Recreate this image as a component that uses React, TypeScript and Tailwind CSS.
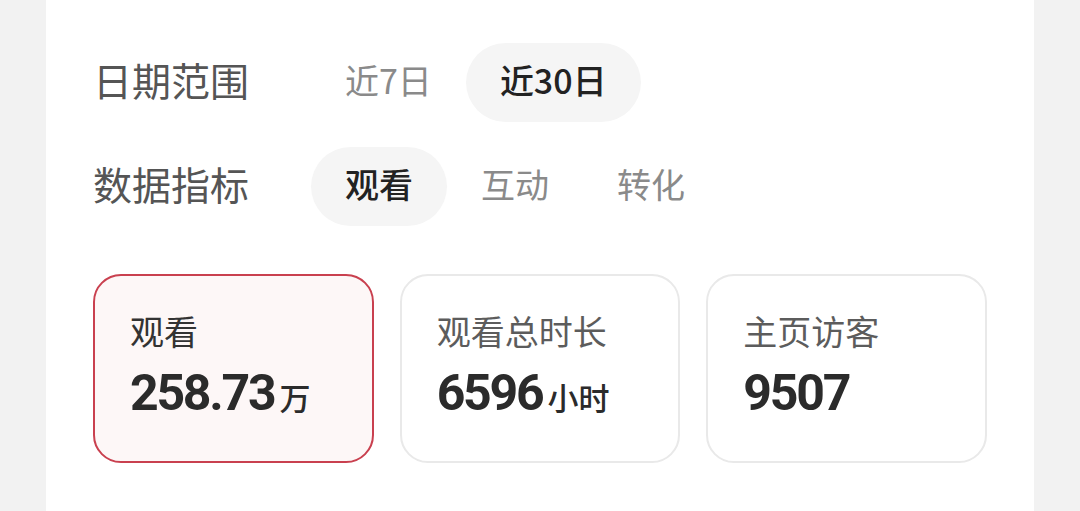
import { useState } from 'react';

const cjk = { fontFamily: '"Noto Sans CJK SC", "Noto Sans", sans-serif' };
const num = { fontFamily: 'Roboto, "Noto Sans CJK SC", sans-serif' };

interface Stat {
  label: string;
  value: string;
  unit?: string;
}

const stats: Stat[] = [
  { label: '观看', value: '258.73', unit: '万' },
  { label: '观看总时长', value: '6596', unit: '小时' },
  { label: '主页访客', value: '9507' },
];

function Pills({ items, active, onPick }: { items: string[]; active: number; onPick: (i: number) => void }) {
  return (
    <div className="flex items-center">
      {items.map((t, i) => (
        <button
          key={t}
          onClick={() => onPick(i)}
          className={`h-[79px] px-[34px] pb-[5px] rounded-full text-[34px] leading-none ${
            i === active ? 'bg-[#f5f5f5] text-[#222] font-medium' : 'text-[#8a8a8a]'
          }`}
        >
          {t}
        </button>
      ))}
    </div>
  );
}

export default function App() {
  const [range, setRange] = useState(1);
  const [metric, setMetric] = useState(0);
  const [card, setCard] = useState(0);

  return (
    <div className="h-[511px] overflow-hidden bg-[#f2f2f2] px-[46px]" style={cjk}>
      <div className="h-full bg-white px-[47px] pt-[43px]">
        <div className="flex items-center">
          <div className="w-[218px] text-[39px] text-[#555] leading-none -mt-[6px]">日期范围</div>
          <Pills items={['近7日', '近30日']} active={range} onPick={setRange} />
        </div>
        <div className="flex items-center mt-[25px]">
          <div className="w-[218px] text-[39px] text-[#555] leading-none -mt-[6px]">数据指标</div>
          <Pills items={['观看', '互动', '转化']} active={metric} onPick={setMetric} />
        </div>

        <div className="grid grid-cols-3 gap-[26px] mt-[48px]">
          {stats.map((s, i) => (
            <div
              key={s.label}
              onClick={() => setCard(i)}
              className={`h-[189px] rounded-[28px] border-[2.5px] pl-[35px] pt-[35px] ${
                i === card ? 'border-[#c9404f] bg-[#fdf7f7]' : 'border-[#e9e9e9] bg-white'
              }`}
            >
              <div className={`text-[34px] leading-[40px] ${i === card ? 'text-[#333]' : 'text-[#5c5c5c]'}`}>
                {s.label}
              </div>
              <div className="flex items-baseline mt-[14px] text-[#2b2b2b]">
                <span className="text-[50px] font-bold leading-[56px] tracking-[-0.045em]" style={num}>
                  {s.value}
                </span>
                {s.unit && <span className="text-[31px] font-medium ml-[5px]">{s.unit}</span>}
              </div>
            </div>
          ))}
        </div>
      </div>
    </div>
  );
}
